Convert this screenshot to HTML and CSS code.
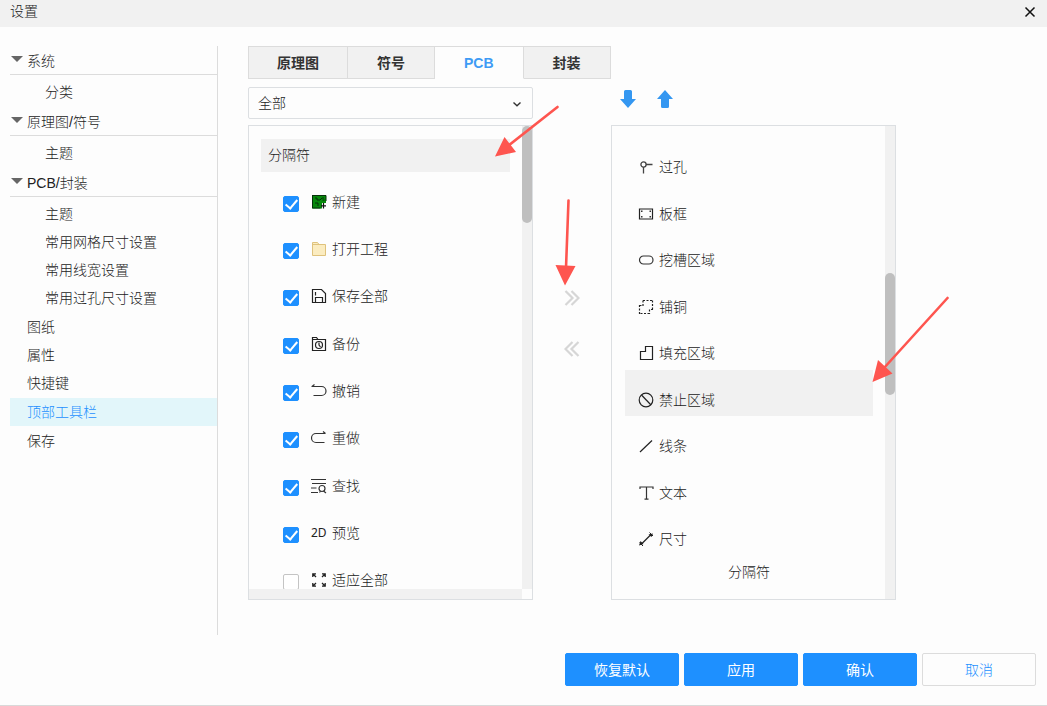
FILE: index.html
```html
<!DOCTYPE html>
<html lang="zh-CN">
<head>
<meta charset="utf-8">
<meta name="viewport" content="width=device-width, initial-scale=1">
<title>设置</title>
<link rel="stylesheet" href="styles.css">
</head>
<body>
<div class="dialog">
  <header class="titlebar">
    <h1 class="title">设置</h1>
    <button class="close" type="button" aria-label="关闭"><svg width="12" height="12" viewBox="0 0 12 12"><path d="M1.500 1.500l9 9M10.500 1.500l-9 9" stroke="#111" stroke-width="1.500"/></svg></button>
  </header>

  <main class="body">
    <nav class="sidebar">
      <button class="group" type="button"><span class="caret"></span>系统</button>
      <ul class="sub">
        <li><a href="#category">分类</a></li>
      </ul>
      <button class="group" type="button"><span class="caret"></span>原理图/符号</button>
      <ul class="sub">
        <li><a href="#sch-theme">主题</a></li>
      </ul>
      <button class="group" type="button"><span class="caret"></span>PCB/封装</button>
      <ul class="sub">
        <li><a href="#pcb-theme">主题</a></li>
        <li><a href="#grid">常用网格尺寸设置</a></li>
        <li><a href="#line">常用线宽设置</a></li>
        <li><a href="#via">常用过孔尺寸设置</a></li>
      </ul>
      <ul class="top">
        <li><a href="#sheet">图纸</a></li>
        <li><a href="#property">属性</a></li>
        <li><a href="#hotkey">快捷键</a></li>
        <li class="current"><a href="#toolbar" aria-current="page">顶部工具栏</a></li>
        <li><a href="#save">保存</a></li>
      </ul>
    </nav>

    <section class="content">
      <div class="tabs" role="tablist">
        <button class="tab" type="button" role="tab">原理图</button>
        <button class="tab" type="button" role="tab">符号</button>
        <button class="tab active" type="button" role="tab" aria-selected="true">PCB</button>
        <button class="tab" type="button" role="tab">封装</button>
      </div>

      <div class="filter">
        <select class="select" aria-label="分类筛选"><option>全部</option></select>
        <svg class="chevron" width="10" height="8" viewBox="0 0 10 8"><path d="M1.500 2.500L5 5.800l3.500-3.300" fill="none" stroke="#333" stroke-width="1.400"/></svg>
      </div>

      <div class="order">
        <button class="icon-btn" type="button" aria-label="下移"><svg width="16" height="18" viewBox="0 0 16 18"><path d="M4 1.500Q4 0 5.500 0h5Q12 0 12 1.500V9h4L8 18 0 9h4z" fill="#3497f1"/></svg></button>
        <button class="icon-btn" type="button" aria-label="上移"><svg width="16" height="18" viewBox="0 0 16 18"><path d="M4 16.500Q4 18 5.500 18h5q1.500 0 1.500-1.500V9h4L8 0 0 9h4z" fill="#3497f1"/></svg></button>
      </div>

      <div class="panel source">
        <div class="view">
          <div class="separator">分隔符</div>
          <ul class="tools">
            <li><label class="tool"><input class="check" type="checkbox" checked><svg class="icon" viewBox="0 0 16 16"><path d="M1 1h14v8h-4v5.500H1z" fill="#07890c"/><path d="M1.500 1.500v12.500h8M1 1.500h14V7M4 4h2v2h3l2-2h2M4 9h3v3M11.500 6h2" fill="none" stroke="#06310a"/><path d="M12.500 9v5.500M10 11.800h5" stroke="#111" stroke-width="1.200"/></svg>新建</label></li>
            <li><label class="tool"><input class="check" type="checkbox" checked><svg class="icon" viewBox="0 0 16 16"><path d="M1.500 14.500v-13h5l1.500 2h6.500v11z" fill="#fbecc0" stroke="#dfc27c"/><path d="M2 3.500h6" stroke="#dfc27c"/></svg>打开工程</label></li>
            <li><label class="tool"><input class="check" type="checkbox" checked><svg class="icon" viewBox="0 0 16 16"><path d="M1.500 1.500h9l4 4v9h-13zM4.500 14V9.500h7V14M4.500 4v3.500" fill="none" stroke="#222" stroke-width="1.200"/></svg>保存全部</label></li>
            <li><label class="tool"><input class="check" type="checkbox" checked><svg class="icon" viewBox="0 0 16 16"><g fill="none" stroke="#222" stroke-width="1.200"><path d="M1.500 14.500v-13h4l1.500 2h7.500v11zM2 3.500h5"/><circle cx="8" cy="9" r="3.500"/><path d="M8 6.500V9l1.500 2"/></g></svg>备份</label></li>
            <li><label class="tool"><input class="check" type="checkbox" checked><svg class="icon" viewBox="0 0 16 16"><path d="M0.500 3.500h10a4.500 4.500 0 0 1 0 9H2.500M3.500 1.500l-2.500 2" fill="none" stroke="#333" stroke-width="1.200"/></svg>撤销</label></li>
            <li><label class="tool"><input class="check" type="checkbox" checked><svg class="icon" viewBox="0 0 16 16"><path d="M14.500 3.500H5a4.500 4.500 0 0 0 0 9h8.500M12 1.500l2.500 2" fill="none" stroke="#333" stroke-width="1.200"/></svg>重做</label></li>
            <li><label class="tool"><input class="check" type="checkbox" checked><svg class="icon" viewBox="0 0 16 16"><g fill="none" stroke="#333" stroke-width="1.200"><path d="M0 1.500h15M1 5.500h14M0 10h5.500M0 14.500h7"/><circle cx="11" cy="10.500" r="3"/><path d="M8.500 14.500l1-1.500M12.500 13l2.500 2"/></g></svg>查找</label></li>
            <li><label class="tool"><input class="check" type="checkbox" checked><span class="icon glyph">2D</span>预览</label></li>
            <li><label class="tool"><input class="check" type="checkbox"><svg class="icon" viewBox="0 0 16 16"><g fill="none" stroke="#222" stroke-width="1.300"><path d="M5 1.800H1.800V5M2 2l3 3M11 1.800h3.200V5M14 2l-3 3M5 14.200H1.800V11M2 14l3-3M11 14.200h3.200V11M14 14l-3-3"/></g></svg>适应全部</label></li>
          </ul>
        </div>
        <div class="track"><div class="thumb thumb-source"></div></div>
        <div class="track-x"></div>
      </div>

      <div class="move">
        <button class="icon-btn" type="button" aria-label="添加"><svg width="16" height="16" viewBox="0 0 16 16"><path d="M1.500 1l7 7-7 7M7.500 1l7 7-7 7" fill="none" stroke="#d6d6d6" stroke-width="2.200"/></svg></button>
        <button class="icon-btn" type="button" aria-label="移除"><svg width="16" height="16" viewBox="0 0 16 16"><path d="M8.500 1l-7 7 7 7M14.500 1l-7 7 7 7" fill="none" stroke="#d6d6d6" stroke-width="2.200"/></svg></button>
      </div>

      <div class="panel target">
        <div class="view">
          <ul class="chosen">
            <li><svg class="icon" viewBox="0 0 16 16"><g fill="none" stroke="#444" stroke-width="1.300"><circle cx="5.500" cy="5.500" r="2.600"/><path d="M8 5.500h6.500M5.500 8v6.500"/></g></svg>过孔</li>
            <li><svg class="icon" viewBox="0 0 16 16"><path d="M1.500 3h13v10h-13z" fill="none" stroke="#222" stroke-width="1.200"/><path d="M3 4.500h1.500V6H3zM11.500 4.500H13V6h-1.500zM3 10h1.500v1.500H3zM11.500 10H13v1.500h-1.500z" fill="#333"/></svg>板框</li>
            <li><svg class="icon" viewBox="0 0 16 16"><rect x="1.500" y="4" width="13.500" height="8" rx="4" fill="none" stroke="#333" stroke-width="1.200"/></svg>挖槽区域</li>
            <li><svg class="icon" viewBox="0 0 16 16"><path d="M5 1.500h10M14.500 1.500v9.500M15 10.500h-3.500M11.500 10.500V15M11.500 14.500h-10M1.500 15V6M1.500 6.500H5M5 7V1.500" fill="none" stroke="#222" stroke-width="1.200" stroke-dasharray="2 1.500"/></svg>铺铜</li>
            <li><svg class="icon" viewBox="0 0 16 16"><path d="M7.500 1.500h7v13h-12v-8h5z" fill="none" stroke="#222" stroke-width="1.200"/></svg>填充区域</li>
            <li class="selected"><svg class="icon" viewBox="0 0 16 16"><g fill="none" stroke="#222" stroke-width="1.200"><circle cx="8" cy="8" r="6.800"/><path d="M3.500 3l9.500 10"/></g></svg>禁止区域</li>
            <li><svg class="icon" viewBox="0 0 16 16"><path d="M2 14L14 2.500" stroke="#222" stroke-width="1.200"/></svg>线条</li>
            <li><svg class="icon" viewBox="0 0 16 16"><path d="M2 4V2h13v2M8.500 2v12M6.500 14.200h4" fill="none" stroke="#333" stroke-width="1.200"/></svg>文本</li>
            <li><svg class="icon" viewBox="0 0 16 16"><path d="M3 13.500L13 3.500" stroke="#222" stroke-width="1.300"/><path d="M1 14.500l1.500-4.500 3 3zM15 2.500L13.500 6l-3-2.500z" fill="#222"/><path d="M1.500 11.500l3.500 3.500M11.500 1.500L15 5" stroke="#222"/></svg>尺寸</li>
          </ul>
          <div class="divider-item">分隔符</div>
        </div>
        <div class="track"><div class="thumb thumb-target"></div></div>
      </div>
    </section>
  </main>

  <footer class="footer">
    <button class="btn" type="button">恢复默认</button>
    <button class="btn" type="button">应用</button>
    <button class="btn" type="button">确认</button>
    <button class="btn plain" type="button">取消</button>
  </footer>

  <svg class="pointers" width="1047" height="706" viewBox="0 0 1047 706" aria-hidden="true">
    <g stroke="#fe554f" stroke-width="2.600" stroke-linecap="round"><path d="M557.500 107L508 146M568.500 200.500L566 268M947.500 298L884 368"/></g>
    <path d="M495 156.500l9.500-19.500L516 152zM565 285.500l-9.500-20.500 20 1zM872.500 382l5.500-22 14.500 13.500z" fill="#fe554f"/>
  </svg>
</div>
</body>
</html>
```
FILE: styles.css
```css
* {
  box-sizing: border-box;
}

body {
  margin: 0;
  background: #fdfdfd;
  color: #222;
  font: 300 14px/20px "Liberation Sans", "Noto Sans CJK SC", sans-serif;
}

ul {
  margin: 0;
  padding: 0;
  list-style: none;
}

button,
select {
  padding: 0;
  border: 0;
  background: none;
  color: inherit;
  font: inherit;
}

svg {
  display: block;
}

.dialog {
  position: relative;
  display: flex;
  flex-direction: column;
  height: 100vh;
  border-bottom: 1px solid #d9d9d9;
}

.titlebar {
  display: flex;
  align-items: center;
  justify-content: space-between;
  padding: 0 11px 5px 10px;
  height: 27px;
  background: #f1f1f1;
}

.close {
  padding-top: 2px;
}

.title {
  margin: 0;
  font-size: 14px;
  font-weight: 300;
}

.body {
  display: flex;
  flex: 1;
  gap: 30px;
  min-height: 0;
  padding: 19px 0 0 10px;
}

/* Sidebar */

.sidebar {
  flex: 0 0 208px;
  border-right: 1px solid #dcdcdc;
}

.group {
  display: flex;
  align-items: center;
  gap: 4px;
  width: 100%;
  height: 29px;
  padding: 2px 0 0 1px;
  border-bottom: 1px solid #dcdcdc;
}

.caret {
  margin-bottom: 4px;
  border: 6px solid transparent;
  border-top-color: #666;
  border-bottom-width: 0;
}

.sub {
  padding: 3px 0 1px;
}

.sub a,
.top a {
  display: block;
  color: inherit;
  line-height: 28px;
  text-decoration: none;
}

.sub a {
  padding-left: 35px;
}

.top a {
  padding-left: 17px;
}

.top .current {
  margin: 1px 0;
  background: #e2f6fa;
  color: #1e90ff;
}

/* Content */

.content {
  display: grid;
  flex: 1;
  grid-template-rows: auto auto minmax(0, 1fr);
  grid-template-columns: minmax(0, 1fr) 78px minmax(0, 1fr);
  padding: 0 151px 35px 0;
}

.tabs {
  display: flex;
  grid-column: 1 / -1;
  margin-bottom: 8px;
}

.tab {
  height: 33px;
  padding: 0 29px;
  border: 1px solid #dcdcdc;
  border-left-width: 0;
  background: #f1f1f1;
  color: #333;
  font-weight: 700;
}

.tab:first-child {
  border-left-width: 1px;
  padding: 0 28px;
}

.tab.active {
  border-bottom-color: transparent;
  background: none;
  color: #3d9bf5;
}

.filter {
  position: relative;
  grid-column: 1;
  margin-bottom: 6px;
}

.select {
  display: block;
  width: 100%;
  height: 32px;
  padding: 0 9px;
  border: 1px solid #dcdfe2;
  border-radius: 2px;
  appearance: none;
}

.chevron {
  position: absolute;
  top: 13px;
  right: 11px;
  pointer-events: none;
}

.order {
  display: flex;
  grid-column: 3;
  gap: 13px;
  align-items: flex-start;
  padding-left: 5px;
}

.icon-btn {
  display: flex;
  align-items: center;
  justify-content: center;
  width: 24px;
  height: 24px;
}

.move {
  display: flex;
  flex-direction: column;
  gap: 27px;
  align-items: center;
  padding-top: 161px;
}

.panel {
  display: grid;
  grid-template-rows: minmax(0, 1fr) auto;
  grid-template-columns: minmax(0, 1fr) 10px;
  border: 1px solid #dcdfe2;
}

.view {
  overflow-y: auto;
  scrollbar-width: none;
  padding: 13px 12px 0;
}

.track {
  background: #f1f1f1;
}

.thumb {
  border-radius: 5px;
  background: #bfbfbf;
}

.thumb-source {
  height: 97px;
}

.thumb-target {
  height: 122px;
  margin-top: 147px;
}

.track-x {
  height: 10px;
  background: #f1f1f1;
}

.separator {
  margin-bottom: 6px;
  padding: 0 7px;
  background: #f1f1f1;
  line-height: 33px;
}

.tool {
  display: flex;
  align-items: center;
  height: 47px;
  padding-left: 22px;
}

.tools li:nth-child(3n) .tool {
  height: 48px;
}

.check {
  flex: none;
  width: 16px;
  height: 16px;
  margin: 4px 12px 0 0;
  border: 1px solid #c4c4c4;
  border-radius: 2px;
  background: #fff;
  appearance: none;
}

.check:checked {
  display: grid;
  place-items: center;
  border-color: #1e90ff;
  background: #1e90ff;
}

.check:checked::before {
  width: 5px;
  height: 10px;
  margin-bottom: 2px;
  border: solid #fff;
  border-width: 0 2px 2px 0;
  content: "";
  transform: rotate(40deg);
}

.icon {
  flex: none;
  width: 16px;
  height: 16px;
  margin-right: 5px;
}

.glyph {
  font: 400 12px/16px "Noto Sans", sans-serif;
}

.target .view {
  padding: 11px 12px 0 13px;
}

.chosen li {
  display: flex;
  align-items: center;
  height: 46px;
  padding: 13px 13px 0;
}

.chosen li:nth-child(odd) {
  height: 47px;
}

.chosen .selected {
  background: #f1f1f1;
}

.divider-item {
  padding-top: 6px;
  text-align: center;
}

.target .track {
  grid-row: 1 / -1;
  grid-column: 2;
}

/* Footer */

.footer {
  display: flex;
  gap: 5px;
  justify-content: flex-end;
  padding: 18px 11px 19px;
}

.btn {
  width: 114px;
  height: 33px;
  border: 1px solid #1e90ff;
  border-radius: 2px;
  background: #1e90ff;
  color: #fff;
  font-weight: 400;
}

.btn.plain {
  border-color: #dcdcdc;
  background: #fdfdfd;
  color: #1e90ff;
  font-weight: 300;
}

.pointers {
  position: absolute;
  top: 0;
  left: 0;
  pointer-events: none;
}
```
